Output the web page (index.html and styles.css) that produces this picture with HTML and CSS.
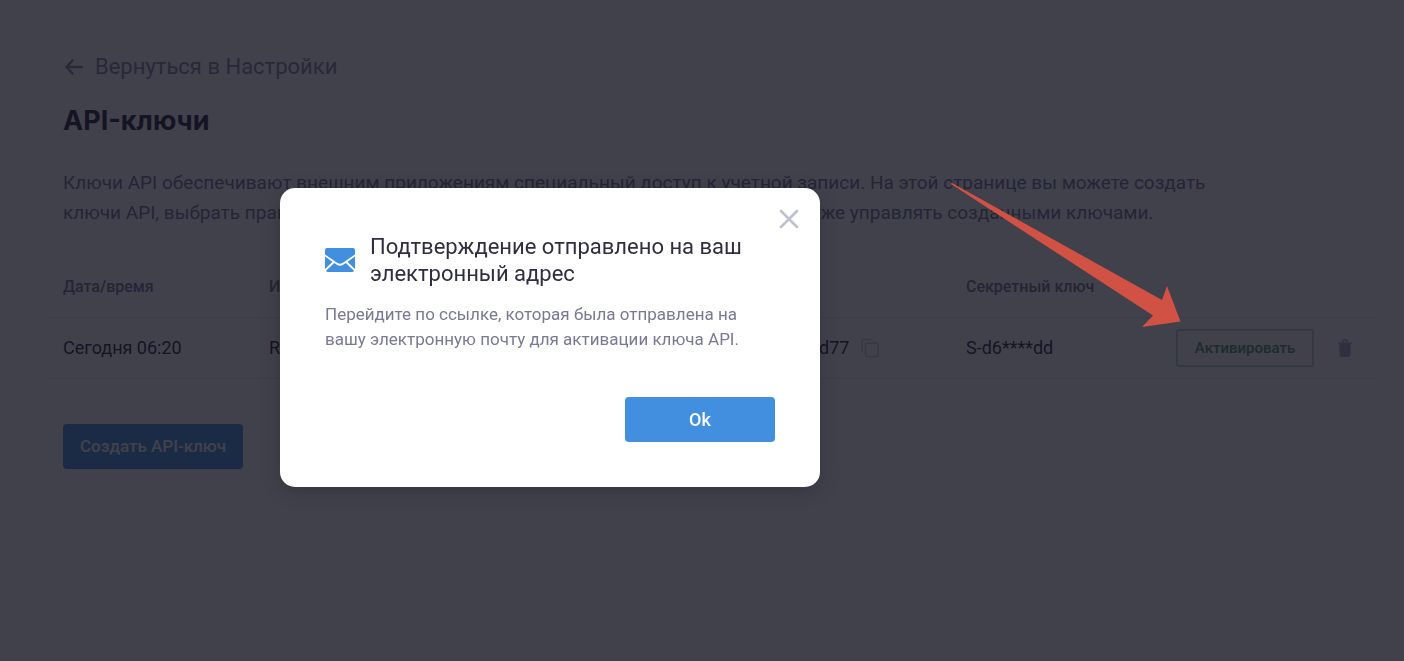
FILE: index.html
```html
<!DOCTYPE html>
<html lang="ru">
<head>
	<meta charset="utf-8">
	<title>API-ключи</title>
	<link rel="stylesheet" href="styles.css">
</head>
<body>
	<main class="page">
		<a class="back" href="#">
			<svg width="18" height="16" viewBox="0 0 18 16" fill="none" stroke="currentColor" stroke-width="2.400" stroke-linecap="round" stroke-linejoin="round">
				<path d="M17 8H1.500M7.500 1.500L1.500 8l6 6.500"/>
			</svg>
			<span>Вернуться в Настройки</span>
		</a>
		<h1>API-ключи</h1>
		<p class="intro">Ключи API обеспечивают внешним приложениям специальный доступ к учетной записи. На этой странице вы можете создать ключи API, выбрать права доступа и подтвердить их через электронную почту, а также управлять созданными ключами.</p>

		<table class="keys">
			<thead>
				<tr>
					<th class="col-date">Дата/время</th>
					<th class="col-name">Имя</th>
					<th class="col-key">Ключ</th>
					<th class="col-secret">Секретный ключ</th>
					<th></th>
				</tr>
			</thead>
			<tbody>
				<tr>
					<td>Сегодня 06:20</td>
					<td>R</td>
					<td>
						<div class="key">
							<span>K-d6****d77</span>
							<button class="icon copy" type="button" aria-label="Копировать">
								<svg width="18" height="20" viewBox="0 0 18 20" fill="none" stroke="currentColor" stroke-width="1.5" stroke-linecap="round">
									<rect x="4.5" y="5" width="12.5" height="13.5" rx="2"/>
									<path d="M1 13V3.5A2 2 0 0 1 3 1.500h8"/>
								</svg>
							</button>
						</div>
					</td>
					<td>S-d6****dd</td>
					<td>
						<div class="actions">
							<button class="activate" type="button">Активировать</button>
							<button class="icon trash" type="button" aria-label="Удалить">
								<svg width="14" height="18" viewBox="0 0 14 18" fill="currentColor">
									<path d="M1 3.500h3V2.500A2.500 2.500 0 0 1 6.500 0h1A2.500 2.500 0 0 1 10 2.500v1h3a1 1 0 0 1 0 2H1a1 1 0 0 1 0-2zM5.500 3.500h3v-1a1 1 0 0 0-1-1h-1a1 1 0 0 0-1 1z" fill-rule="evenodd"/>
									<path d="M1.500 5h11v10.500a2.500 2.500 0 0 1-2.500 2.500H4a2.500 2.500 0 0 1-2.500-2.500z"/>
								</svg>
							</button>
						</div>
					</td>
				</tr>
			</tbody>
		</table>

		<button class="btn create" type="button">Создать API-ключ</button>
	</main>

	<div class="overlay">
		<div class="modal" role="dialog" aria-labelledby="modal-title">
			<button class="icon close" type="button" aria-label="Закрыть">
				<svg width="20" height="20" viewBox="0 0 20 20" fill="none" stroke="currentColor" stroke-width="2.600" stroke-linecap="round">
					<path d="M2 2l16 16M18 2L2 18"/>
				</svg>
			</button>
			<div class="modal-head">
				<svg class="mail" width="30" height="24" viewBox="0 0 30 24" fill="currentColor">
					<path d="M2 0h26a2 2 0 0 1 2 2v4.500L17.500 15q-2.500 1.600-5 0L0 6.500V2a2 2 0 0 1 2-2z"/>
					<path d="M0 8.500l7.500 5.300L0 21zM30 8.500l-7.500 5.300L30 21z"/>
					<path d="M9.300 15l2.500 1.700q3.200 2 6.400 0l2.500-1.700 8.300 7.800q-.5 1.200-2 1.200h-24q-1.500 0-2-1.200z"/>
				</svg>
				<h2 id="modal-title">Подтверждение отправлено на ваш электронный адрес</h2>
			</div>
			<p>Перейдите по ссылке, которая была отправлена на вашу электронную почту для активации ключа API.</p>
			<div class="modal-foot">
				<button class="btn ok" type="button">Ok</button>
			</div>
		</div>
	</div>

	<svg class="pointer" width="230" height="145" viewBox="0 0 230 145">
		<path d="M0 1L1 0l210 117l5-14 13.500 35.500L191 144l11-11.500z" fill="#d15144"/>
	</svg>
</body>
</html>
```

FILE: styles.css
```css
* {
	box-sizing: border-box;
}
body {
	margin: 0;
	background: #fff;
	color: #1f1f33;
	font-family: Roboto, "Liberation Sans", sans-serif;
	font-size: 18px;
}
h1, h2, p {
	margin: 0;
}
button {
	font-family: inherit;
	cursor: pointer;
}
svg {
	display: block;
}

.page {
	padding: 52px 29px 0 45px;
}
.back {
	display: flex;
	align-items: center;
	gap: 12px;
	margin-left: 20px;
	color: #8081a0;
	font-size: 22px;
	line-height: 29px;
	text-decoration: none;
}
h1 {
	margin: 22px 0 0 18px;
	font-family: Inter, sans-serif;
	font-size: 27px;
	line-height: 36px;
	font-weight: 700;
}
.intro {
	max-width: 1200px;
	margin: 29px 0 0 18px;
	color: #6f7192;
	font-size: 19px;
	line-height: 30px;
}

.keys {
	width: 100%;
	margin-top: 28px;
	table-layout: fixed;
	border-collapse: collapse;
}
.keys th,
.keys td {
	height: 61px;
	padding: 0 0 0 18px;
	border-bottom: 1px solid #e9e9f0;
	text-align: left;
}
.keys th {
	color: #6f7192;
	font-size: 16px;
	font-weight: 500;
}
.col-date {
	width: 206px;
}
.col-name {
	width: 483px;
}
.col-key {
	width: 214px;
}
.col-secret {
	width: 210px;
}
.key {
	display: flex;
	align-items: center;
	gap: 12px;
}
.actions {
	display: flex;
	align-items: center;
	gap: 24px;
}

.icon {
	padding: 0;
	border: 0;
	background: none;
}
.copy {
	color: #cacbd9;
}
.trash {
	color: #a6a7c0;
}
.activate {
	width: 138px;
	height: 38px;
	border: 2px solid #b8d4c0;
	border-radius: 3px;
	background: none;
	color: #4f8f62;
	font-size: 15px;
	font-weight: 500;
}
.btn {
	height: 45px;
	border: 0;
	border-radius: 4px;
	background: #418fde;
	color: #fff;
	font-size: 17px;
	font-weight: 500;
}
.create {
	width: 180px;
	margin: 45px 0 0 18px;
}

.overlay {
	position: fixed;
	inset: 0;
	padding: 188px 20px 20px 280px;
	background: rgba(18, 17, 31, .8);
}
.modal {
	position: relative;
	max-width: 540px;
	padding: 45px;
	border-radius: 15px;
	background: #fff;
	box-shadow: 0 4px 20px rgba(0, 0, 0, .2);
}
.close {
	position: absolute;
	top: 21px;
	right: 21px;
	color: #bfc0cf;
}
.modal-head {
	display: flex;
	align-items: center;
	gap: 15px;
}
.mail {
	flex: none;
	color: #418fde;
}
.modal h2 {
	color: #2f2e3e;
	font-size: 22px;
	line-height: 27px;
	font-weight: 400;
}
.modal p {
	margin-top: 15px;
	color: #777a92;
	font-size: 17px;
	line-height: 25px;
}
.modal-foot {
	display: flex;
	justify-content: flex-end;
	margin-top: 45px;
}
.ok {
	width: 150px;
	font-size: 18px;
}

.pointer {
	position: absolute;
	top: 183px;
	left: 951px;
}
```
